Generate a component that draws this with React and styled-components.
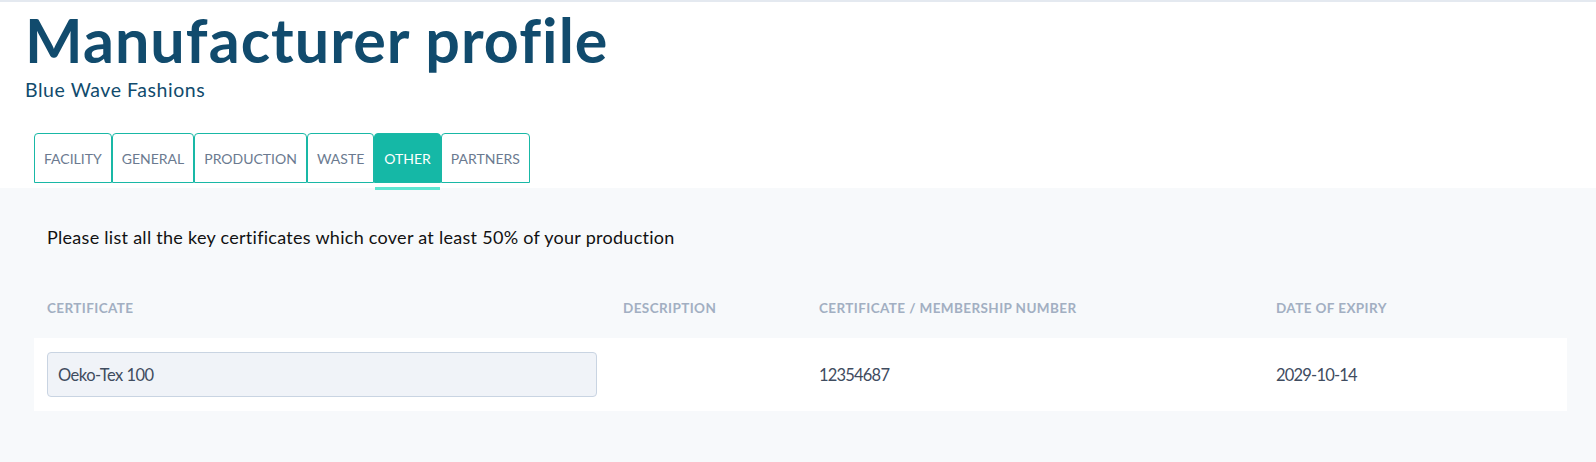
import React from "react";
import styled, { createGlobalStyle } from "styled-components";

const GlobalStyle = createGlobalStyle`
  html, body {
    margin: 0;
    padding: 0;
    background: #ffffff;
    font-family: Lato, "Open Sans", Arial, sans-serif;
  }
  * { box-sizing: border-box; }
`;

const Page = styled.div`
  width: 1596px;
  min-height: 462px;
  border-top: 2px solid #e4e9f0;
  background: #ffffff;
`;

const Header = styled.header`
  padding: 0 0 0 25px;
`;

const Title = styled.h1`
  margin: 1px 0 0 0;
  font-size: 61px;
  line-height: 73px;
  font-weight: 700;
  color: #114b6d;
  letter-spacing: 1.05px;
`;

const Subtitle = styled.div`
  margin-top: 2px;
  font-size: 19.5px;
  line-height: 24px;
  color: #114b6d;
  letter-spacing: 0.55px;
`;

const Tabs = styled.nav`
  display: flex;
  margin: 31px 0 0 34px;
  padding-bottom: 5px;
`;

const Tab = styled.button`
  position: relative;
  height: 50px;
  padding: 0 9px;
  border: 1px solid #19b8a6;
  border-radius: 4px 4px 0 0;
  background: ${(p) => (p.$active ? "#15b8a6" : "#ffffff")};
  color: ${(p) => (p.$active ? "#ffffff" : "#6b7a90")};
  font-family: Lato, sans-serif;
  font-size: 14px;
  letter-spacing: 0;
  text-transform: uppercase;
  cursor: pointer;

  &::after {
    content: "";
    display: ${(p) => (p.$active ? "block" : "none")};
    position: absolute;
    left: 0;
    right: 0;
    bottom: -8px;
    height: 3px;
    background: #5ee6d2;
  }
`;

const Section = styled.section`
  background: #f7f9fb;
  padding: 37px 29px 52px 34px;
`;

const Intro = styled.p`
  margin: 0 0 0 13px;
  font-size: 18px;
  line-height: 24px;
  letter-spacing: 0.28px;
  color: #111111;
`;

const Table = styled.div`
  margin-top: 49px;
`;

const Row = styled.div`
  display: grid;
  grid-template-columns: 576px 196px 457px 1fr;
  align-items: center;
`;

const HeadRow = styled(Row)`
  padding-bottom: 20px;
`;

const BodyRow = styled(Row)`
  background: #ffffff;
  padding: 14px 0;
`;

const HeadCell = styled.div`
  padding: 0 13px;
  font-size: 13.5px;
  line-height: 20px;
  font-weight: 700;
  letter-spacing: 0.4px;
  text-transform: uppercase;
  color: #a2afc2;
`;

const Cell = styled.div`
  padding: 0 13px;
  font-size: 16.5px;
  line-height: 22px;
  letter-spacing: -0.8px;
  color: #3f4c5f;
`;

const Field = styled.div`
  height: 45px;
  display: flex;
  align-items: center;
  padding: 0 10px;
  background: #f0f3f8;
  border: 1px solid #c9d4e2;
  border-radius: 4px;
  font-size: 16.5px;
  letter-spacing: -0.5px;
  color: #3f4c5f;
`;

const tabs = ["Facility", "General", "Production", "Waste", "Other", "Partners"];

export default function App() {
  return (
    <Page>
      <GlobalStyle />
      <Header>
        <Title>Manufacturer profile</Title>
        <Subtitle>Blue Wave Fashions</Subtitle>
      </Header>
      <Tabs>
        {tabs.map((t) => (
          <Tab key={t} $active={t === "Other"}>
            {t}
          </Tab>
        ))}
      </Tabs>
      <Section>
        <Intro>Please list all the key certificates which cover at least 50% of your production</Intro>
        <Table>
          <HeadRow>
            <HeadCell>Certificate</HeadCell>
            <HeadCell>Description</HeadCell>
            <HeadCell>Certificate / Membership number</HeadCell>
            <HeadCell>Date of expiry</HeadCell>
          </HeadRow>
          <BodyRow>
            <Cell>
              <Field>Oeko-Tex 100</Field>
            </Cell>
            <Cell></Cell>
            <Cell>12354687</Cell>
            <Cell>2029-10-14</Cell>
          </BodyRow>
        </Table>
      </Section>
    </Page>
  );
}
